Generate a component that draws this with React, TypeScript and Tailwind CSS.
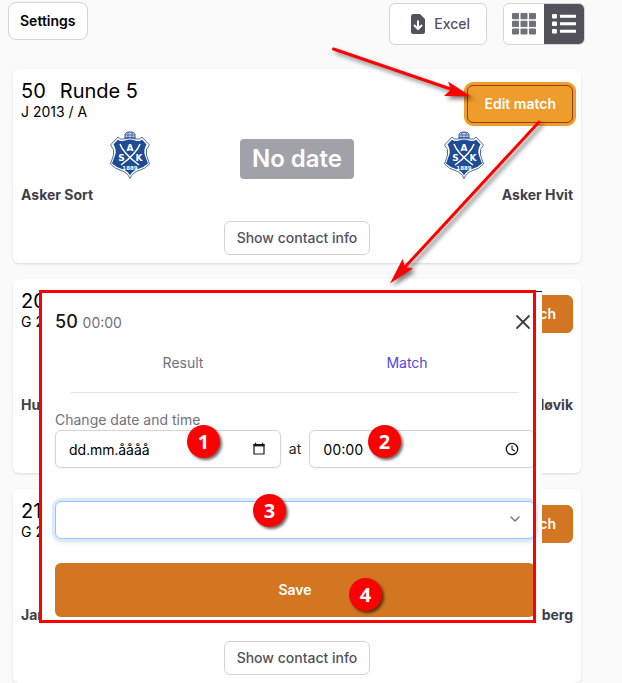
import { useState } from 'react';
import type { ReactNode } from 'react';
import { ChevronDown, X } from 'lucide-react';

type Match = {
  id: string;
  round: string;
  group: string;
  home: string;
  away: string;
  active?: boolean;
};

const matches: Match[] = [
  { id: '50', round: 'Runde 5', group: 'J 2013 / A', home: 'Asker Sort', away: 'Asker Hvit', active: true },
  { id: '20', round: '', group: 'G 2', home: 'Hu', away: 'løvik' },
  { id: '21', round: '', group: 'G 2', home: 'Jar', away: 'berg' },
];

function Crest() {
  return (
    <svg viewBox="0 0 40 48" className="w-10 h-12 mx-auto" role="img" aria-label="ASK 1889">
      <path d="M15 8V4Q15 1 20 1Q25 1 25 4V8Z" fill="#c5d1e5" stroke="#1f4c94" strokeWidth="1" />
      <path d="M16 4H24M15 6.500H25M18 1.500V8M22 1.500V8" stroke="#1f4c94" strokeWidth=".7" />
      <path
        d="M14 8Q20 6 26 8Q30 9 32 6L39.500 14Q35 18 36.500 24L39.500 33Q35 38 29 39.500Q23 41 20 47.500Q17 41 11 39.500Q5 38 .5 33L3.500 24Q5 18 .5 14L8 6Q10 9 14 8Z"
        fill="#fff"
        stroke="#1f4c94"
        strokeWidth=".8"
      />
      <path
        d="M15 9.500Q20 7.500 25 9.500Q30 11 32 8.500L36.500 13.500Q33 19 35 24.500L38 32.500Q33 37 28 38Q22.500 39.500 20 44.500Q17.500 39.500 12 38Q7 37 2 32.500L5 24.500Q7 19 3.500 13.500L8 8.500Q10 11 15 9.500Z"
        fill="#1f4c94"
      />
      <path d="M10 13Q13 22 29 34M30 13Q27 22 11 34" fill="none" stroke="#fff" strokeWidth="1.400" />
      <g fill="#fff" fontFamily="'DejaVu Sans', sans-serif" fontWeight="bold" textAnchor="middle">
        <text x="20" y="20" fontSize="9">A</text>
        <text x="11.500" y="30" fontSize="9">S</text>
        <text x="29" y="30" fontSize="9">K</text>
        <text x="20" y="38.500" fontSize="5.500">1889</text>
      </g>
    </svg>
  );
}

function MatchCard({ match }: { match: Match }) {
  return (
    <article className="bg-white rounded-md shadow-sm p-2">
      <div className="flex items-start justify-between">
        <div className="text-black">
          <h2 className="flex gap-3.5 text-xl leading-7">
            <span>{match.id}</span>
            <span>{match.round}</span>
          </h2>
          <p className="text-sm leading-3.5">{match.group}</p>
        </div>
        <button
          className={
            match.active
              ? 'mt-2 h-[38px] px-4 rounded-md text-sm font-semibold text-white bg-[#ee9c2c] border border-[#92400e] ring-3 ring-[#ee9c2c]'
              : 'mt-2 h-[38px] px-4 rounded-md text-sm font-semibold text-white bg-[#d27621] border border-[#d27621]'
          }
        >
          Edit match
        </button>
      </div>

      {/* Teams */}
      <div className="flex mt-2 text-sm font-bold text-zinc-700">
        <div className="flex-1">
          <Crest />
          <p className="mt-1 leading-6">{match.home}</p>
        </div>
        <div className="mt-2 h-10 px-3 rounded-sm bg-[#a1a1aa] text-2xl font-semibold leading-10 text-white">No date</div>
        <div className="flex-1 text-right">
          <Crest />
          <p className="mt-1 leading-6">{match.away}</p>
        </div>
      </div>

      <div className="flex justify-center mt-3.5">
        <button className="h-[34px] px-3 rounded-md border border-zinc-300 bg-white text-sm font-medium text-zinc-600">
          Show contact info
        </button>
      </div>
    </article>
  );
}

function Field({ id, label, value, icon }: { id: string; label: string; value: string; icon: ReactNode }) {
  const [text, setText] = useState(value);

  return (
    <div className="relative flex-1">
      <input
        id={id}
        aria-label={label}
        value={text}
        onChange={(e) => setText(e.target.value)}
        className="w-full h-[38px] pl-[13px] pr-10 rounded-md border border-zinc-300 bg-white shadow-xs text-sm text-black tabular-nums"
      />
      <span className="absolute inset-y-0 right-3.5 flex items-center">{icon}</span>
    </div>
  );
}

function EditDialog() {
  return (
    <section
      role="dialog"
      aria-label="Edit match"
      className="absolute left-[39px] top-[291px] w-[503px] bg-white border-t border-[#111827] pl-4 pr-[7px] pb-1.5"
    >
      <div className="flex items-center justify-between pt-4 pr-1">
        <h3 className="text-lg leading-7 font-medium text-zinc-900">
          50 <span className="text-sm font-normal text-zinc-500">00:00</span>
        </h3>
        <button aria-label="Close">
          <X className="w-6 h-6 -mr-1 text-zinc-700" strokeWidth={1.8} />
        </button>
      </div>

      {/* Tabs */}
      <div role="tablist" className="grid grid-cols-2 mt-2 mx-4 h-[49px] border-b border-zinc-200 text-sm font-normal">
        <button role="tab" aria-selected="false" className="h-[38px] text-zinc-500">Result</button>
        <button role="tab" aria-selected="true" className="h-[38px] text-[#4f46e5]">Match</button>
      </div>

      <label htmlFor="match-date" className="block mt-[17px] leading-5 text-sm text-zinc-500">
        Change date and time
      </label>
      <div className="flex items-center gap-2 text-sm text-zinc-800">
        <Field
          id="match-date"
          label="Change date"
          value="dd.mm.åååå"
          icon={
            <svg viewBox="0 0 14 14" className="w-3.5 h-3.5 mr-px" fill="none" stroke="#18181b">
              <path d="M2 2.500H12V12H2Z" strokeWidth="1.200" />
              <path d="M1.500 3.300H12.500" strokeWidth="2.200" />
              <path d="M3.500 .8V3M10.500 .8V3" strokeWidth="1.300" />
            </svg>
          }
        />
        <span>at</span>
        <Field
          id="match-time"
          label="Change time"
          value="00:00"
          icon={
            <svg viewBox="0 0 14 14" className="w-3.5 h-3.5 mr-0.5" fill="none" stroke="#18181b" strokeWidth="1.300">
              <circle cx="7" cy="7" r="5.700" />
              <path d="M7 3.500V7.200L9.700 9" strokeWidth="1.100" />
            </svg>
          }
        />
      </div>

      <div className="relative mt-[33px]">
        <select
          aria-label="Pitch"
          className="block w-full h-[38px] px-3 appearance-none rounded-md border border-[#93c5fd] bg-white text-sm ring-3 ring-[#dbeafe] shadow-md"
        />
        <ChevronDown className="absolute right-3 top-2.5 w-4 h-4 text-zinc-500 pointer-events-none" />
      </div>

      <button className="w-full h-[54px] mt-6 rounded-md bg-[#d27621] text-sm font-semibold text-white">Save</button>

      <div className="absolute -top-0.5 bottom-0 left-0 right-1.5 border-3 border-[#ff0000] pointer-events-none" />
    </section>
  );
}

const steps = [
  { n: 1, pos: 'left-[187px] top-[425px]' },
  { n: 2, pos: 'left-[368px] top-[425px]' },
  { n: 3, pos: 'left-[253px] top-[494px]' },
  { n: 4, pos: 'left-[349px] top-[578px]' },
];

function Annotations() {
  return (
    <div className="absolute inset-0 pointer-events-none">
      <svg width="622" height="300" viewBox="0 0 622 300" className="absolute left-0 top-0 drop-shadow-[3px_3px_2px_rgba(0,0,0,0.5)]">
        <g stroke="#ff0000" strokeWidth="3" strokeLinecap="round">
          <path d="M333.500 49L452 89.500" />
          <path d="M539 122L405 267" />
        </g>
        <path d="M471 96.500L448 81.500L451 89.500L444 96Z" fill="#ff0000" />
        <path d="M390 283.500L402.500 259L405 267L413 268.500Z" fill="#ff0000" />
      </svg>
      {steps.map((s) => (
        <span
          key={s.n}
          className={`absolute ${s.pos} flex items-center justify-center w-[33px] h-[33px] rounded-full bg-[#ff0000] shadow-[2px_2px_3px_rgba(0,0,0,0.6)] font-['Noto_Sans',sans-serif] text-xl leading-8 font-bold text-white`}
        >
          {s.n}
        </span>
      ))}
    </div>
  );
}

export default function App() {
  return (
    <div className="relative min-h-screen overflow-hidden bg-[#fafafa] font-['Inter',sans-serif]">
      {/* Toolbar */}
      <header className="flex items-start justify-between pt-0.5 pl-2 pr-[37px]">
        <button className="h-[38px] px-[11px] rounded-lg border border-zinc-300 bg-white text-sm font-semibold text-black">
          Settings
        </button>
        <div className="flex gap-4 pt-px">
          <button className="flex items-center gap-2 h-[42px] pl-5 pr-4 rounded-md border border-zinc-300 bg-white text-sm font-medium text-zinc-600">
            <svg viewBox="0 0 16 20" className="w-4 h-5">
              <path d="M3.500 0H10L15 5V17.500Q15 20 12.500 20H3.500Q1 20 1 17.500V2.500Q1 0 3.500 0Z" fill="#52525b" />
              <path d="M8 6.500V14.500M4 11L8 15L12 11" fill="none" stroke="#fff" strokeWidth="2" />
            </svg>
            Excel
          </button>
          <div className="flex h-[42px] rounded-md border border-zinc-300 bg-white overflow-hidden">
            <button aria-label="Grid view" className="px-2">
              <svg viewBox="0 0 24 22" className="w-6 h-[22px]" fill="#71717a">
                {[0, 8.5, 17].map((x) =>
                  [0, 7.7, 15.4].map((y) => <rect key={`${x}-${y}`} x={x} y={y} width="7" height="6.200" rx="1" />)
                )}
              </svg>
            </button>
            <button aria-label="List view" className="px-2 bg-zinc-600">
              <svg viewBox="0 0 24 22" className="w-6 h-[22px]" fill="#fff">
                {[1, 8.5, 16].map((y) => (
                  <g key={y}>
                    <rect x="0" y={y} width="5" height="4.500" rx="1" />
                    <rect x="8" y={y + 0.8} width="16" height="3" rx=".5" />
                  </g>
                ))}
              </svg>
            </button>
          </div>
        </div>
      </header>

      <main className="flex flex-col gap-4 mt-6 pl-[13px] pr-[41px]">
        {matches.map((m) => (
          <MatchCard key={m.id} match={m} />
        ))}
      </main>

      <EditDialog />
      <Annotations />
    </div>
  );
}
